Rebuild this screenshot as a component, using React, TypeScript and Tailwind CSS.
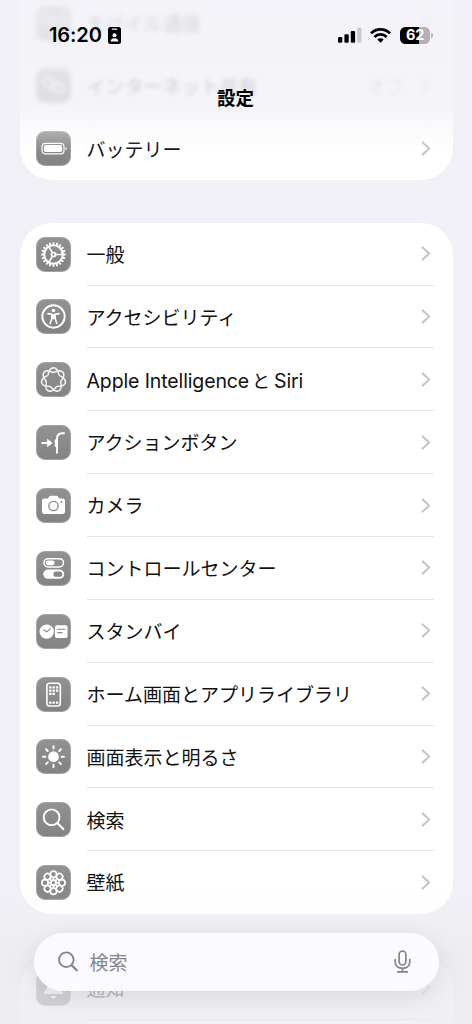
import type { ReactNode } from 'react'

const range = (n: number) => Array.from({ length: n }, (_, i) => i)

// All glyphs are drawn on a 35x35 grid, white on the gray tile
function Tile({ children }: { children: ReactNode }) {
  return (
    <div className="size-[35px] shrink-0 overflow-hidden rounded-[9px] border border-[#a3a3a4] bg-gradient-to-b from-[#929293] to-[#838384]">
      <svg viewBox="1 1 33 33" className="block size-full" fill="none" stroke="#fff" strokeLinecap="round" strokeLinejoin="round">
        {children}
      </svg>
    </div>
  )
}

const BatteryGlyph = () => (
  <Tile>
    <rect x="6" y="12.300" width="22" height="10.600" rx="3.400" strokeWidth="1.200" />
    <rect x="7.900" y="14.100" width="18.200" height="7" rx="1.900" fill="#fff" stroke="none" />
    <path d="M29.6 16v3.2c1-.3 1.3-.9 1.3-1.6s-.3-1.3-1.3-1.6z" fill="#fff" stroke="none" />
  </Tile>
)

const GearGlyph = () => (
  <Tile>
    {range(20).map((i) => (
      <path key={i} d="M17.5 5.200v2.500" strokeWidth="1.800" strokeLinecap="butt" transform={`rotate(${i * 18} 17.5 17.5)`} />
    ))}
    <circle cx="17.500" cy="17.500" r="9.300" strokeWidth="2.100" />
    <circle cx="17.500" cy="17.500" r="2" strokeWidth="1.700" />
    <path d="M19.700 17.500h6.600M16.400 15.600l-3.600-6M16.400 19.400l-3.600 6" strokeWidth="1.700" />
  </Tile>
)

const AccessibilityGlyph = () => (
  <Tile>
    <circle cx="17.500" cy="17.500" r="11.200" strokeWidth="1.900" />
    <circle cx="17.500" cy="11.500" r="1.800" fill="#fff" stroke="none" />
    <path d="M12 14.600l3.900.8v3.800l-1.700 5.400M23 14.600l-3.900.8v3.800l1.700 5.400" strokeWidth="1.600" />
    <path d="M15.400 15h4.200v4.400l-2.100 1.200-2.100-1.200z" fill="#fff" stroke="none" />
  </Tile>
)

// Seven-lobed knot: the radius swings 3.5 times per turn, closing after two turns
const knot = range(280)
  .map((i) => {
    const a = (i / 280) * Math.PI * 4
    const r = 9.8 + 2.3 * Math.cos(3.5 * a)
    return `${(17.5 + r * Math.sin(a)).toFixed(2)},${(17.9 - r * Math.cos(a)).toFixed(2)}`
  })
  .join(' ')

const IntelligenceGlyph = () => (
  <Tile>
    <polygon points={knot} strokeWidth="1.600" strokeOpacity=".88" />
  </Tile>
)

const ActionGlyph = () => (
  <Tile>
    <path d="M6.200 18h6.300" strokeWidth="1.800" />
    <path d="M11.700 14.600l4.500 3.400-4.500 3.400z" fill="#fff" strokeWidth=".8" />
    <path d="M28 8.300h-1.800c-3.700 0-5.200 2-5.200 5.500v14" strokeWidth="1.900" />
    <path d="M19.600 15.200v5.800" strokeWidth="1.700" />
  </Tile>
)

const CameraGlyph = () => (
  <Tile>
    <path
      d="M8.300 10.600h3.500l1.400-2c.4-.6.800-.8 1.500-.8h5.600c.7 0 1.100.2 1.500.8l1.400 2h3.500c1.500 0 2.300.9 2.300 2.300v10.600c0 1.500-.9 2.400-2.400 2.400H8.400c-1.500 0-2.400-.9-2.400-2.400V12.900c0-1.400.8-2.300 2.300-2.300z"
      fill="#fff"
      stroke="none"
    />
    <circle cx="17.500" cy="18" r="4.700" stroke="#88888a" strokeWidth="1.300" />
    <circle cx="25.500" cy="14.100" r="1" fill="#88888a" stroke="none" />
  </Tile>
)

const ControlGlyph = () => (
  <Tile>
    <rect x="8" y="7.700" width="19.500" height="8.200" rx="4.100" strokeWidth="1.500" />
    <rect x="9.700" y="9.400" width="9" height="4.800" rx="2.400" fill="#fff" stroke="none" />
    <rect x="7.300" y="18.600" width="20.900" height="9.200" rx="4.600" fill="#fff" stroke="none" />
    <rect x="17.500" y="20.600" width="8.800" height="5.200" rx="2.600" fill="#858586" stroke="none" />
  </Tile>
)

const StandByGlyph = () => (
  <Tile>
    <circle cx="10.700" cy="17.600" r="7.200" fill="#fff" stroke="none" />
    <path d="M7.900 15.800l2.900 2.100 3.500-3.200" stroke="#858586" strokeWidth="1.100" />
    <rect x="18.900" y="11.200" width="12.700" height="12.800" rx="2" fill="#fff" stroke="none" />
    <path d="M21.700 15.300h7.200M21.700 18.600h4.300" stroke="#858586" strokeWidth="1.100" />
  </Tile>
)

const HomeGlyph = () => (
  <Tile>
    <rect x="10.900" y="6.200" width="13.400" height="22.800" rx="2.800" strokeWidth="1.600" />
    {[9.3, 12.5, 15.7, 24.4].map((y, row) =>
      [13.1, 16.5, 19.9].map((x, col) =>
        row === 2 && col === 2 ? null : <rect key={`${x}-${y}`} x={x} y={y} width="2.400" height="2.300" rx=".5" fill="#fff" stroke="none" />
      )
    )}
  </Tile>
)

const SunGlyph = () => (
  <Tile>
    <circle cx="17.500" cy="17.700" r="5.400" fill="#fff" stroke="none" />
    {range(8).map((i) => (
      <path key={i} d="M17.5 7.200v2.400" strokeWidth="1.900" transform={`rotate(${i * 45} 17.5 17.7)`} />
    ))}
  </Tile>
)

const SearchGlyph = () => (
  <Tile>
    <circle cx="15.600" cy="15.300" r="7.900" strokeWidth="1.900" />
    <path d="M21.500 21.200l5.800 5.800" strokeWidth="2.300" />
  </Tile>
)

const WallpaperGlyph = () => (
  <Tile>
    {range(8).map((i) => (
      <circle key={i} cx="17.500" cy="9.200" r="3.100" strokeWidth="1.700" transform={`rotate(${i * 45} 17.5 17.7)`} />
    ))}
    {range(8).map((i) => (
      <path key={i} d="M17.5 12.300v2.800" strokeWidth="1.900" transform={`rotate(${i * 45} 17.5 17.7)`} />
    ))}
    <circle cx="17.500" cy="17.700" r="2.400" strokeWidth="1.500" />
  </Tile>
)

const AntennaGlyph = () => (
  <Tile>
    <circle cx="17.500" cy="14" r="2.500" fill="#fff" stroke="none" />
    <path d="M17.500 15v13M12.500 19a7 7 0 010-10M22.500 19a7 7 0 000-10M9 22a11 11 0 010-16M26 22a11 11 0 000-16" strokeWidth="1.700" />
  </Tile>
)

const HotspotGlyph = () => (
  <Tile>
    <rect x="6" y="12.500" width="13" height="8" rx="4" strokeWidth="1.900" transform="rotate(20 17.5 17.5)" />
    <rect x="16" y="14.500" width="13" height="8" rx="4" strokeWidth="1.900" transform="rotate(20 17.5 17.5)" />
  </Tile>
)

const BellGlyph = () => (
  <Tile>
    <path d="M17.500 7c-4.200 0-6 3-6 6.500 0 4.500-1.500 5.500-3.500 7.500-.8.900-.4 2 .8 2h17.400c1.200 0 1.600-1.100.8-2-2-2-3.500-3-3.500-7.500 0-3.500-1.800-6.500-6-6.500z" fill="#fff" stroke="none" />
    <path d="M14.800 25c.3 1.600 1.300 2.400 2.700 2.400s2.400-.8 2.700-2.400z" fill="#fff" stroke="none" />
  </Tile>
)

type RowProps = { icon: ReactNode; label: ReactNode; value?: string; last?: boolean; className?: string }

function Row({ icon, label, value, last, className = '' }: RowProps) {
  return (
    <div className={`flex h-[62.86px] items-center pl-4 ${className}`}>
      {icon}
      <div
        className={`ml-4 mr-[19px] flex h-full flex-1 items-center border-b pr-[3px] text-[19px] text-[#111] ${last ? 'border-transparent' : 'border-[#e3e3e5]'}`}
      >
        <span className="flex-1 whitespace-nowrap pt-[5px]">{label}</span>
        {value && <span className="mr-4 pt-[5px] text-[#a8a8ac]">{value}</span>}
        <svg width="10" height="15" viewBox="0 0 10 15" fill="none" stroke="#c4c4c7" strokeWidth="2" strokeLinecap="round" strokeLinejoin="round">
          <path d="M1.700 1.400l6.500 6.100-6.500 6.100" />
        </svg>
      </div>
    </div>
  )
}

const mainRows: { icon: ReactNode; label: ReactNode }[] = [
  { icon: <GearGlyph />, label: '一般' },
  { icon: <AccessibilityGlyph />, label: 'アクセシビリティ' },
  {
    icon: <IntelligenceGlyph />,
    label: (
      <span className="text-[19.5px] tracking-[-0.12px]">
        Apple Intelligence<span className="ml-[3px] mr-[4px] text-[18px]">と</span>Siri
      </span>
    ),
  },
  { icon: <ActionGlyph />, label: 'アクションボタン' },
  { icon: <CameraGlyph />, label: 'カメラ' },
  { icon: <ControlGlyph />, label: 'コントロールセンター' },
  { icon: <StandByGlyph />, label: 'スタンバイ' },
  { icon: <HomeGlyph />, label: 'ホーム画面とアプリライブラリ' },
  { icon: <SunGlyph />, label: '画面表示と明るさ' },
  { icon: <SearchGlyph />, label: '検索' },
  { icon: <WallpaperGlyph />, label: '壁紙' },
]

function StatusBar() {
  return (
    <div className="flex h-[70px] items-center justify-between pl-[49px] pr-[39px]">
      <div className="flex items-center gap-[6px]">
        <span className="text-[20px] font-semibold tracking-[-0.1px]">16:20</span>
        <svg width="13" height="17" viewBox="0 0 13 17">
          <rect width="13" height="17" rx="2.500" fill="#000" />
          <rect x="3.700" y="1.500" width="5.600" height="1.300" rx=".6" fill="#fff" />
          <circle cx="6.500" cy="8.200" r="2" fill="#fff" />
          <path d="M2.600 14.600c0-2.200 1.700-3.400 3.900-3.400s3.900 1.200 3.900 3.400z" fill="#fff" />
        </svg>
      </div>
      <div className="flex items-center">
        <svg width="24" height="16" viewBox="0 0 24 16">
          <rect x="0" y="10" width="4.300" height="5.800" rx="1.200" />
          <rect x="6.400" y="7.200" width="4.300" height="8.600" rx="1.200" />
          <rect x="12.800" y="4" width="4.300" height="11.800" rx="1.200" />
          <rect x="19.200" y="0.400" width="4.300" height="15.400" rx="1.200" fill="#cbcbcf" />
        </svg>
        <svg className="ml-2" width="21" height="15" viewBox="0 0 21 15" fill="none" stroke="#000" strokeWidth="2.700">
          <path d="M1 5.400a13.400 13.400 0 0119 0M4.400 9a8.600 8.600 0 0112.200 0" />
          <path d="M10.500 14.800L7.300 11.600a4.500 4.500 0 016.400 0z" fill="#000" stroke="none" />
        </svg>
        <div className="ml-[9px] flex h-[17px] w-[30px] items-center justify-center rounded-[5.5px] bg-[linear-gradient(to_right,#000_63%,#b2b2b6_63%)] text-[14.5px] font-bold tracking-[-0.3px] text-white">
          62
        </div>
        <div className="ml-[1px] h-[5px] w-[2px] rounded-r-full bg-[#b2b2b6]" />
      </div>
    </div>
  )
}

export default function App() {
  return (
    <div className="relative h-[1024px] w-[472px] overflow-hidden bg-[#f1f0f6] font-['Inter','Noto_Sans_CJK_JP',sans-serif]">
      <main className="flex flex-col gap-[42.5px] pl-[19.5px] pr-[19px]">
        <section className="-mt-[8.4px] rounded-b-[32px] bg-white">
          <Row icon={<AntennaGlyph />} label="モバイル通信" className="blur-[2.5px]" />
          <Row icon={<HotspotGlyph />} label="インターネット共有" value="オフ" className="blur-[2px]" />
          <Row icon={<BatteryGlyph />} label="バッテリー" last />
        </section>
        <section className="rounded-[32px] bg-white">
          {mainRows.map((row, i) => (
            <Row key={i} icon={row.icon} label={row.label} last={i === mainRows.length - 1} />
          ))}
        </section>
        <section className="h-[80px] rounded-t-[32px] bg-white">
          <Row icon={<BellGlyph />} label="通知" />
        </section>
      </main>

      {/* Frosted header over the scrolled list */}
      <header className="absolute inset-x-0 top-0 h-[160px] bg-[linear-gradient(to_bottom,rgba(242,241,247,0.88)_0px,rgba(242,241,247,0.82)_105px,rgba(242,241,247,0.4)_125px,rgba(242,241,247,0)_150px)]">
        <StatusBar />
        <h1 className="mt-[15px] pr-px text-center text-[18.5px] leading-[26px] font-bold">設定</h1>
      </header>

      {/* Bottom fade and floating search field */}
      <div className="absolute inset-x-0 bottom-0 flex h-[140px] items-start bg-[linear-gradient(to_bottom,rgba(236,235,240,0)_0px,rgba(236,235,240,0.12)_30px,rgba(236,235,240,0.72)_72px,rgba(236,235,240,0.76)_140px)] px-[33.5px] pt-[48.5px]">
        <div className="flex h-[58px] w-full items-center rounded-full bg-[#fbfaff]/97 pl-6 pr-[28px] text-[#858589] shadow-[0_6px_28px_rgba(0,0,0,0.1)]">
          <svg width="20" height="21" viewBox="0 0 20 21" fill="none" stroke="currentColor" strokeLinecap="round">
            <circle cx="8.300" cy="8.700" r="7.300" strokeWidth="1.800" />
            <path d="M13.700 14.200l5 5" strokeWidth="2.300" />
          </svg>
          <span className="ml-3 flex-1 pt-[5px] text-[19px]">検索</span>
          <svg width="17" height="23" viewBox="0 0 17 23" fill="none" stroke="currentColor" strokeWidth="1.700" strokeLinecap="round">
            <rect x="5.100" y="1" width="6.800" height="14" rx="3.400" />
            <path d="M1.200 9.500v2.300c0 4 3 6.500 7.300 6.500s7.300-2.500 7.300-6.500V9.500M8.500 18.300v3.400M3.700 21.900h9.600" />
          </svg>
        </div>
      </div>
    </div>
  )
}
